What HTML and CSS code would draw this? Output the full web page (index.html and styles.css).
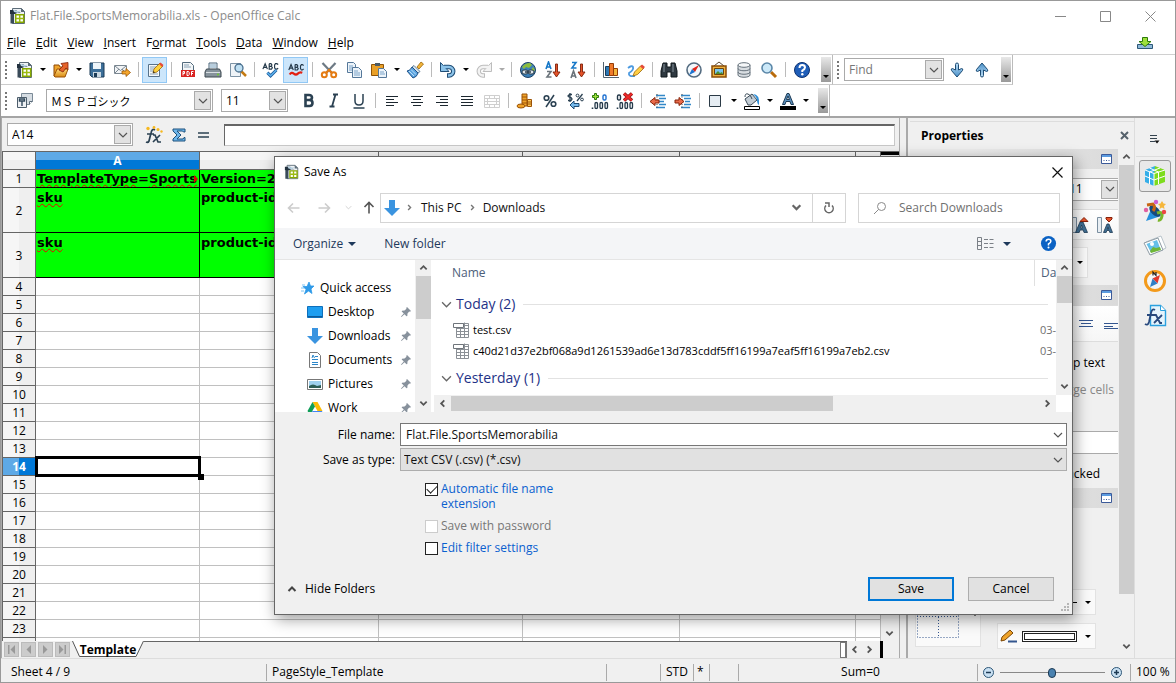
FILE: index.html
```html
<!DOCTYPE html>
<html lang="en">
<head>
<meta charset="utf-8">
<title>Flat.File.SportsMemorabilia.xls - OpenOffice Calc</title>
<link rel="stylesheet" href="styles.css">
</head>
<body>
<svg class="defs" aria-hidden="true">
<defs>
<linearGradient id="g-blue" x1="0" y1="0" x2="0" y2="1"><stop offset="0" stop-color="#bfe0f7"/><stop offset="1" stop-color="#4a90c8"/></linearGradient>
<linearGradient id="g-gold" x1="0" y1="0" x2="0" y2="1"><stop offset="0" stop-color="#ffd97a"/><stop offset="1" stop-color="#d98a12"/></linearGradient>
</defs>
<symbol id="calc" viewBox="0 0 18 18"><path d="M3.500 1.500h9l3 3v12h-12z" fill="#eef2f5" stroke="#5c6c78"/><path d="M12 1l4 4h-4z" fill="#5c6c78"/><path d="M1.500 7v9.500H5V6z" fill="#3a4b59"/><path d="M1 3h6l2 2 3 1H8L6 7H1z" fill="#23323f"/><path d="M4 2.500l5 1.500 3-.5-3 2.500-4-1z" fill="#b9d3e4"/><path d="M6.700 7.700h8v7.600h-8z" fill="#fff" stroke="#86a800" stroke-width="1.500"/><path d="M10.700 8v7M7 11.500h7.500" stroke="#9dbb10" stroke-width="1.500"/></symbol>
<symbol id="open" viewBox="0 0 18 18"><path d="M2 15V4h5l1 2h6v3" fill="#f0a52c" stroke="#8e4b05"/><path d="M2 15l3-7h11l-3 8H3z" fill="url(#g-gold)" stroke="#9b5307"/><path d="M7 9l4-4-2-2.500 7-1v7L14 7l-3 4z" fill="#e5632a" stroke="#85210a" stroke-width=".8"/></symbol>
<symbol id="save" viewBox="0 0 18 18"><path d="M2 2h14v14H4l-2-2z" fill="#3c6f99" stroke="#1b3b57"/><path d="M5 2h8v6H5z" fill="#eef5fa"/><path d="M5 11h8v5H5z" fill="#c8d6e0"/><path d="M6 12h3v4H6z" fill="#1b3b57"/></symbol>
<symbol id="mail" viewBox="0 0 18 18"><path d="M1.500 4.500h12v8h-12z" fill="#f2f4f6" stroke="#7a8791"/><path d="M2 5l5.500 4.500L13 5M2 12l4-4M13 12L9 8" fill="none" stroke="#7a8791"/><path d="M9 10h4V7.500l4.500 4-4.500 4V13H9z" fill="#f3a52c" stroke="#9a5606" stroke-width=".8"/></symbol>
<symbol id="edit" viewBox="0 0 18 18"><path d="M2.500 3.500h11v12h-11z" fill="#f4f8fb" stroke="#57728a"/><path d="M4 6h6M4 8h5M4 10h4M4 13h8" stroke="#8aa2b5"/><path d="M7 12l1-4 6-6 3 3-6 6z" fill="#ffd23c" stroke="#9b6607" stroke-width=".8"/><path d="M13 3l1.500-1.500 3 2.500L16 6z" fill="#e54b3b"/><path d="M7 12l.5-2 1.500 1.500z" fill="#222"/></symbol>
<symbol id="pdf" viewBox="0 0 18 18"><path d="M3.500 1.500h8l3 3v11h-11z" fill="#f3f6f8" stroke="#536b7d"/><path d="M5 4h5M5 6h7" stroke="#8aa2b5"/><path d="M2 9h14v7H2z" fill="#d92321"/><path d="M4 14.500V10.500h1.500v2H4M8 10.500v4h1.500l.7-1v-2l-.7-1zM12.500 14.500v-4h2M12.500 12.500h1.500" fill="none" stroke="#fff"/></symbol>
<symbol id="print" viewBox="0 0 18 18"><path d="M5 2h8v7H5z" fill="#f5f8fa" stroke="#49647b"/><path d="M6 4h6M6 6h6" stroke="#7ba3c0"/><path d="M2.500 8h13l1.500 3v5H1v-5z" fill="#87939c" stroke="#3c4850"/><path d="M2 11.500h14" stroke="#d9dfe3"/><circle cx="14" cy="13.500" r="1" fill="#71cf2b"/></symbol>
<symbol id="preview" viewBox="0 0 18 18"><path d="M1.500 2.500h10v13h-10z" fill="#eef3f7" stroke="#7d93a5"/><path d="M12 10l5 5" stroke="#c47b14" stroke-width="2.500"/><circle cx="10" cy="7" r="4" fill="#bfe0f3" stroke="#4a6f8e" stroke-width="1.300"/></symbol>
<symbol id="spell" viewBox="0 0 20 18"><path d="M1 8l2.500-6L6 8M2 6h3M8 2v6h2.500l1-1.500-1-1.500H8h2l1-1.500-1-1.500H8M18 3l-1.500-1h-1.500L14 3.500v3L15 8h1.500L18 7" fill="none" stroke="#24394a" stroke-width="1.300"/><path d="M6 12l3.500 3.500L16 9" fill="none" stroke="#1d5c9c" stroke-width="3.400"/><path d="M6 12l3.500 3.500L16 9" fill="none" stroke="#5eb4ef" stroke-width="1.500"/></symbol>
<symbol id="autospell" viewBox="0 0 20 18"><path d="M2 9l2.500-6L7 9M3 7h3M9 3v6h2.500l1-1.500-1-1.500H9h2l1-1.500-1-1.500H9M18.500 4L17 3h-1l-1 1.500v3L16 9h1l1.500-1" fill="none" stroke="#24394a" stroke-width="1.300"/><path d="M3 14q2-3 4.500-1t4.500 0 5-1" fill="none" stroke="#e22112" stroke-width="2.500"/></symbol>
<symbol id="cut" viewBox="0 0 18 18"><path d="M2.500 2l9 9.500M15.500 2l-9 9.500" stroke="#6d7a85" stroke-width="2.200"/><path d="M6 12l3-3 3 3" fill="none" stroke="#e47b12" stroke-width="2"/><circle cx="4.300" cy="13.700" r="2.500" fill="#fff" stroke="#e47b12" stroke-width="2"/><circle cx="13.700" cy="13.700" r="2.500" fill="#fff" stroke="#e47b12" stroke-width="2"/></symbol>
<symbol id="copy" viewBox="0 0 18 18"><path d="M2.500 1.500h6l2 2v8h-8z" fill="#edf4fa" stroke="#55789a"/><path d="M4 5h4M4 7h5M4 9h4" stroke="#7ba3c8"/><path d="M7.500 6.500h6l3 3v7h-9z" fill="#edf4fa" stroke="#55789a"/><path d="M9 10h4M9 12h6M9 14h6" stroke="#7ba3c8"/></symbol>
<symbol id="paste" viewBox="0 0 18 18"><path d="M1.500 3.500h12v11h-12z" fill="#e9a028" stroke="#8f5408"/><path d="M5 2h5v3H5z" fill="#4b5b66"/><path d="M8.500 7.500h5l3 3v6h-8z" fill="#edf4fa" stroke="#55789a"/><path d="M10 11h4M10 13h5" stroke="#7ba3c8"/></symbol>
<symbol id="brush" viewBox="0 0 18 18"><path d="M11 6l4-5 2.500 2-4.500 5z" fill="#f3b53b" stroke="#9b6607" stroke-width=".8"/><path d="M8 4.500l6 6-2 1.500-6-6z" fill="#d7e3ec" stroke="#44657f" stroke-width=".8"/><path d="M6 6l6 6q-1 4-5 5l-6-7q3 0 5-4z" fill="#5ba4e0" stroke="#1f5288"/><path d="M3 10l5 5M5 8.500l5 5" stroke="#bfe0f7"/></symbol>
<symbol id="undo" viewBox="0 0 18 18"><path d="M5 6h5a4 4 0 0 1 0 8.500H8" fill="none" stroke="#1f4d75" stroke-width="4.400"/><path d="M1.500 1.500v9h8.500z" fill="#8cc3e9" stroke="#1f4d75"/><path d="M4 6h6a4 4 0 0 1 0 8.500H9" fill="none" stroke="#8cc3e9" stroke-width="2.400"/></symbol>
<symbol id="redo" viewBox="0 0 18 18"><path d="M13 6H8a4 4 0 0 0 0 8.500h2" fill="none" stroke="#bdbdbd" stroke-width="4.400"/><path d="M16.500 1.500v9H8z" fill="#f3f3f3" stroke="#bdbdbd"/><path d="M14 6H8a4 4 0 0 0 0 8.500h1" fill="none" stroke="#f3f3f3" stroke-width="2.400"/></symbol>
<symbol id="link" viewBox="0 0 18 18"><circle cx="9" cy="9" r="7.500" fill="#3c80b8" stroke="#1c4064"/><path d="M3 6q3-4 8-4l2 2-3 3-3-1-2 2zM14 6l2 3-2 3-2-3z" fill="#8dbd3c"/><rect x="3" y="9" width="6" height="4" rx="2" fill="#dfe6eb" stroke="#2b3d4b"/><rect x="9" y="9" width="6" height="4" rx="2" fill="#dfe6eb" stroke="#2b3d4b"/><path d="M6 11h6" stroke="#2b3d4b" stroke-width="1.500"/></symbol>
<symbol id="sorta" viewBox="0 0 18 18"><path d="M2 8l2.500-7L7 8M3 6h3" fill="none" stroke="#1778c8" stroke-width="1.600"/><path d="M3 10.500h4L3 16h4.500" fill="none" stroke="#6b747b" stroke-width="1.600"/><path d="M11.500 3h2v8h2.500l-3.500 5L9 11h2.500z" fill="#e5532a" stroke="#7d210a" stroke-width=".9"/></symbol>
<symbol id="sortz" viewBox="0 0 18 18"><path d="M3 1.500h4L3 7h4.500" fill="none" stroke="#1778c8" stroke-width="1.600"/><path d="M2 17l2.500-7L7 17M3 15h3" fill="none" stroke="#6b747b" stroke-width="1.600"/><path d="M11.500 3h2v8h2.500l-3.500 5L9 11h2.500z" fill="#e5532a" stroke="#7d210a" stroke-width=".9"/></symbol>
<symbol id="chart" viewBox="0 0 18 18"><path d="M1.500 1v15.500H17" fill="none" stroke="#53636f"/><path d="M3.500 5.500h4v9h-4z" fill="#2e78b3" stroke="#153c5d"/><path d="M7.500 2.500h4v12h-4z" fill="#f07a2b" stroke="#943c06"/><path d="M11.500 7.500h4v7h-4z" fill="#f3b53b" stroke="#943c06"/></symbol>
<symbol id="draw" viewBox="0 0 18 18"><path d="M1 7q4-3 5-1 1 3-4 6-1 4 6 3" fill="none" stroke="#4c9ae0" stroke-width="1.800"/><path d="M6 15l1.500-4L14 4.500l3 2.500-6.500 6.500z" fill="#ffcf45" stroke="#9b6607" stroke-width=".8"/><path d="M13 5.500l2-2 3 2.500-2 2z" fill="#e54b3b"/></symbol>
<symbol id="find" viewBox="0 0 18 18"><path d="M3 2h4v4h4V2h4l2 8v6h-6v-5H7v5H1v-6z" fill="#2f3941" stroke="#11181d"/><path d="M4 3v8M13 3v8" stroke="#87939c"/></symbol>
<symbol id="nav" viewBox="0 0 18 18"><circle cx="9" cy="9" r="7" fill="#f3f8fc" stroke="#536b80" stroke-width="1.600"/><path d="M14 4l-4 7-3-3z" fill="#e2241a"/><path d="M4 14l3-6 3 3z" fill="#1d74d0"/></symbol>
<symbol id="gallery" viewBox="0 0 18 18"><path d="M4 5l5-4 5 4" fill="none" stroke="#5b4a33"/><path d="M2 5h14v11H2z" fill="#efb23d" stroke="#8a4d09" stroke-width="1.500"/><path d="M4.500 7.500h9v6h-9z" fill="#79c4ee" stroke="#6d4309"/><path d="M5 13l3-3 2 2 2-1 1 2z" fill="#4c8e2e"/></symbol>
<symbol id="db" viewBox="0 0 18 18"><path d="M3 4v10c0 3 12 3 12 0V4" fill="#d8dde1" stroke="#66727c"/><ellipse cx="9" cy="4" rx="6" ry="2.300" fill="#f5f7f8" stroke="#66727c"/><path d="M3 7.500c0 3 12 3 12 0M3 11c0 3 12 3 12 0" fill="none" stroke="#66727c"/></symbol>
<symbol id="zoom" viewBox="0 0 18 18"><path d="M11 11l5 5" stroke="#b86b0c" stroke-width="3"/><circle cx="7" cy="7" r="5" fill="#cbe8f8" stroke="#5b87a8" stroke-width="1.600"/></symbol>
<symbol id="help" viewBox="0 0 18 18"><circle cx="9" cy="9" r="7.500" fill="#1f5eb8" stroke="#0d3170"/><path d="M6.500 7q0-3 2.700-3T12 6.500Q12 8 9.300 9.500V11" fill="none" stroke="#fff" stroke-width="2"/><circle cx="9.300" cy="13.200" r="1.200" fill="#fff"/></symbol>
<symbol id="down" viewBox="0 0 18 18"><path d="M7.500 3.500q0-1.500 1.500-1.500t1.500 1.500V9l3-1.500q2 0 1 2L9 16 3.500 9.500q-1-2 1-2l3 1.500z" fill="url(#g-blue)" stroke="#1f4d75"/></symbol>
<symbol id="styles" viewBox="0 0 18 18"><path d="M5.500 1.500h11v8l-3 3h-8z" fill="#d6dde3" stroke="#7b8a97"/><path d="M16.500 9.500h-3v3" fill="#fff" stroke="#5d6d7b"/><path d="M1.500 5.500h9v10h-9z" fill="#eef1f4" stroke="#4c5d6b"/><path d="M3.500 8v-1h5v2h-5zM6 9v5" fill="none" stroke="#32495c" stroke-width="1.400"/></symbol>
<symbol id="bold" viewBox="0 0 18 18"><path d="M5.500 3v11h4q3 0 3-3t-3-3h-4 3.500q3 0 3-2.500T9 3z" fill="none" stroke="#2b4152" stroke-width="2.600"/></symbol>
<symbol id="italic" viewBox="0 0 18 18"><path d="M8 2.500h5M4.500 14.500h5M10.500 2.500l-3.500 12" fill="none" stroke="#2b4152" stroke-width="1.800"/></symbol>
<symbol id="under" viewBox="0 0 18 18"><path d="M5 2v7q0 4 4 4t4-4V2M3.500 16h11" fill="none" stroke="#2b4152" stroke-width="1.500"/></symbol>
<symbol id="al" viewBox="0 0 18 18"><path d="M3 4.500h12M3 7.500h8M3 10.500h12M3 13.500h8" stroke="#1d2830"/></symbol>
<symbol id="ac" viewBox="0 0 18 18"><path d="M3 4.500h12M5 7.500h8M3 10.500h12M5 13.500h8" stroke="#1d2830"/></symbol>
<symbol id="ar" viewBox="0 0 18 18"><path d="M3 4.500h12M7 7.500h8M3 10.500h12M7 13.500h8" stroke="#1d2830"/></symbol>
<symbol id="aj" viewBox="0 0 18 18"><path d="M3 4.500h12M3 7.500h12M3 10.500h12M3 13.500h12" stroke="#1d2830"/></symbol>
<symbol id="merge" viewBox="0 0 18 18"><path d="M1.500 3.500h15v12h-15zM1.500 6.500h15M1.500 9.500h15M1.500 12.500h15M6.500 3.500v3M11.500 3.500v3M6.500 12.500v3M11.500 12.500v3M4.500 6.500v6M13.500 6.500v6" fill="none" stroke="#cfcfcf"/></symbol>
<symbol id="coins" viewBox="0 0 18 18"><path d="M6 2h5v12H6z" fill="#f0a42a" stroke="#9b5307"/><path d="M11.500 7.500h4v7h-4z" fill="#ffc857" stroke="#9b5307"/><ellipse cx="5" cy="14" rx="4" ry="2" fill="#f0a42a" stroke="#9b5307"/><path d="M6 5h5M6 8h5M6 11h5M12 10h3M12 12h3" stroke="#9b5307"/></symbol>
<symbol id="pct" viewBox="0 0 18 18"><circle cx="5.500" cy="6" r="2.300" fill="none" stroke="#2b4152" stroke-width="1.600"/><circle cx="12.500" cy="12" r="2.300" fill="none" stroke="#2b4152" stroke-width="1.600"/><path d="M13 3L5 15" stroke="#2b4152" stroke-width="1.500"/></symbol>
<symbol id="std" viewBox="0 0 18 18"><path d="M6 2.500H3.500L2 4l1 1 2 .5L6 7 5 8.500H2M4 1v9M16.500 2L11 9" fill="none" stroke="#2b4152" stroke-width="1.300"/><circle cx="11.500" cy="3.500" r="1.400" fill="none" stroke="#2b4152"/><circle cx="16" cy="7.500" r="1.400" fill="none" stroke="#2b4152"/><path d="M4 13l4-4v2.500h5v3H8V17z" fill="#74b8ea" stroke="#1f4d75"/></symbol>
<symbol id="zeros" viewBox="0 0 18 8"><path d="M1.500 6v1.500" stroke="#24394a" stroke-width="1.600"/><rect x="4" y="1" width="2.500" height="6" rx="1.200" fill="none" stroke="#24394a" stroke-width="1.300"/><rect x="9" y="1" width="2.500" height="6" rx="1.200" fill="none" stroke="#24394a" stroke-width="1.300"/><rect x="14" y="1" width="2.500" height="6" rx="1.200" fill="none" stroke="#24394a" stroke-width="1.300"/></symbol>
<symbol id="addd" viewBox="0 0 18 18"><path d="M3.500 1.500h2v2h2v2h-2v2h-2v-2h-2v-2h2z" fill="#9ee03c" stroke="#2c7a09"/><rect x="12" y="3" width="3" height="5" rx="1.300" fill="none" stroke="#1d6fd0" stroke-width="1.400"/><use href="#zeros" y="9.500" width="18" height="8"/></symbol>
<symbol id="deld" viewBox="0 0 18 18"><rect x="1.500" y="3" width="3" height="5" rx="1.300" fill="none" stroke="#24394a" stroke-width="1.400"/><use href="#zeros" y="9.500" width="18" height="8"/><path d="M8 1.500l8 7M16 1.500l-8 7" stroke="#8e0d0d" stroke-width="3.500"/><path d="M8 1.500l8 7M16 1.500l-8 7" stroke="#ef2b2b" stroke-width="2"/></symbol>
<symbol id="indl" viewBox="0 0 18 18"><path d="M7 3.500h9M10 6.500h7M10 9.500h5M10 12.500h7M7 15.500h9" stroke="#3388c8" stroke-width="1.400"/><path d="M8 2v15" stroke="#444" stroke-dasharray="1 1.500"/><path d="M1 9.500l5-4V8h4v3H6v2.500z" fill="#e86a4a" stroke="#862309"/></symbol>
<symbol id="indr" viewBox="0 0 18 18"><path d="M7 3.500h9M10 6.500h7M11 9.500h5M10 12.500h7M7 15.500h9" stroke="#3388c8" stroke-width="1.400"/><path d="M8 2v15" stroke="#444" stroke-dasharray="1 1.500"/><path d="M10 9.500l-5-4V8H1v3h4v2.500z" fill="#e86a4a" stroke="#862309"/></symbol>
<symbol id="border" viewBox="0 0 18 18"><path d="M2.500 3.500h11v11h-11z" fill="#e6edf3" stroke="#2b3a46"/></symbol>
<symbol id="fill" viewBox="0 0 18 18"><path d="M2 7l7-5 5 6-6 5H5z" fill="#c3cdd5" stroke="#3c4c59"/><path d="M2 5q0-4 3-3t4 5" fill="none" stroke="#3c4c59"/><path d="M10 2q7 0 6 11-2-1-2-5-1-4-4-6z" fill="#2f8fd8"/><path d="M1.500 14.500h15v3h-15z" fill="#fff" stroke="#000"/></symbol>
<symbol id="fcol" viewBox="0 0 18 18"><path d="M3.500 12.500L8 1.500h2l4.500 11H12l-1-3H7l-1 3zM7.500 7.500h3L9 4z" fill="#5b90bd" stroke="#1d3a54" fill-rule="evenodd"/><path d="M1 14h16v4H1z" fill="#000"/></symbol>
<symbol id="fx" viewBox="0 0 18 18"><path d="M10 4q-3-2-4 3L4 15q-1 2-3 1M2 8h7M8 9l2 0 3 7h3M15 9l-7 7" fill="none" stroke="#2b4152" stroke-width="1.700"/><g fill="#f6b921"><circle cx="3" cy="2.500" r="1.700"/><circle cx="9" cy="1.500" r="1.400"/><circle cx="13" cy="3.500" r="1.500"/><circle cx="16.500" cy="5.500" r="1.200"/></g></symbol>
<symbol id="sum" viewBox="0 0 18 18"><path d="M3 3h12v3h-1.500l-1-1H7l4 4-4 4h6l1-1.500H15V15H3v-2l4-4-4-4z" fill="#6cb5ea" stroke="#1c517d"/></symbol>
<symbol id="eq" viewBox="0 0 18 18"><path d="M3 7h11M3 11h11" stroke="#2b4152" stroke-width="1.600"/></symbol>
<symbol id="chev" viewBox="0 0 10 10"><path d="M1 3l4 4 4-4" fill="none" stroke="currentColor" stroke-width="1.200"/></symbol>
<symbol id="bchev" viewBox="0 0 10 10"><path d="M1.500 3l3.500 3.500L8.500 3" fill="none" stroke="currentColor" stroke-width="2"/></symbol>
<symbol id="arrow" viewBox="0 0 14 14"><path d="M1.500 7h11M6 2.500L1.500 7 6 11.500" fill="none" stroke="currentColor" stroke-width="1.600"/></symbol>
<symbol id="dl" viewBox="0 0 16 16"><path d="M5 0h6v8h5l-8 8-8-8h5z" fill="#3a94e0"/></symbol>
<symbol id="more" viewBox="0 0 11 10"><path d="M.5.5h10v9H.5z" fill="#fff" stroke="#3c5a99"/><path d="M1 2h9" stroke="#5b9be0" stroke-width="2"/><path d="M2.500 6.500h6" stroke="#3c5a99" stroke-dasharray="1 1.500"/></symbol>
<symbol id="pin" viewBox="0 0 10 10"><path d="M6 0l4 4-1 .8-.8-.3L6.500 6.500 6.300 9 5.500 9.300 3.500 7.200.5 10 0 9.500l2.800-3L.7 4.500 1 3.700l2.500-.2 2-1.700L5.200 1z" fill="#87919c"/></symbol>
<symbol id="csv" viewBox="0 0 16 16"><path d="M3.500 1.500h12v14h-12zM7.500 1.500v14M11.500.5v15M3.500 6.500h12M3.500 9.500h12M3.500 12.500h12M8 3.500h7.500" fill="#fff" stroke="#8b9096"/><path d="M.5 1.500h10v4H.5z" fill="#fff" stroke="#6f757b"/></symbol>
</svg>

<div class="window">
<header class="titlebar">
<svg class="ic"><use href="#calc"/></svg><h1>Flat.File.SportsMemorabilia.xls - OpenOffice Calc</h1>
<div class="winbtns">
<button aria-label="Minimize"><svg viewBox="0 0 11 11"><path d="M0 5.500h11"/></svg></button>
<button aria-label="Maximize"><svg viewBox="0 0 11 11"><path d="M.5.5h10v10H.5z"/></svg></button>
<button aria-label="Close"><svg viewBox="0 0 11 11"><path d="M.5.5l10 10M10.500.5l-10 10"/></svg></button>
</div>
</header>
<nav class="menubar">
<a href="#"><u>F</u>ile</a><a href="#"><u>E</u>dit</a><a href="#"><u>V</u>iew</a><a href="#"><u>I</u>nsert</a><a href="#">F<u>o</u>rmat</a><a href="#"><u>T</u>ools</a><a href="#"><u>D</u>ata</a><a href="#"><u>W</u>indow</a><a href="#"><u>H</u>elp</a>
<button class="update" aria-label="Updates available"><svg viewBox="0 0 16 12"><path d="M.5 7.500h15v4H.5z" fill="#8fb9d8" stroke="#2c5878"/><path d="M5.500.5h5v4H14L8 9.500 2 4.500h3.500z" fill="#9ee03c" stroke="#2c7a09"/></svg></button>
</nav>

<div class="toolrow">
<div class="toolbar">
<i class="grip"></i>
<button class="tb" aria-label="New"><svg class="ic"><use href="#calc"/></svg></button><button class="dd" aria-label="New options"></button>
<button class="tb" aria-label="Open"><svg class="ic"><use href="#open"/></svg></button><button class="dd" aria-label="Open options"></button>
<button class="tb" aria-label="Save document"><svg class="ic"><use href="#save"/></svg></button>
<button class="tb" aria-label="E-mail"><svg class="ic"><use href="#mail"/></svg></button><i class="sep"></i>
<button class="tb on" aria-label="Edit file"><svg class="ic"><use href="#edit"/></svg></button><i class="sep"></i>
<button class="tb" aria-label="Export PDF"><svg class="ic"><use href="#pdf"/></svg></button>
<button class="tb" aria-label="Print"><svg class="ic"><use href="#print"/></svg></button>
<button class="tb" aria-label="Preview"><svg class="ic"><use href="#preview"/></svg></button><i class="sep"></i>
<button class="tb" aria-label="Spelling"><svg class="ic"><use href="#spell"/></svg></button>
<button class="tb on" aria-label="AutoSpellcheck"><svg class="ic"><use href="#autospell"/></svg></button><i class="sep"></i>
<button class="tb" aria-label="Cut"><svg class="ic"><use href="#cut"/></svg></button>
<button class="tb" aria-label="Copy"><svg class="ic"><use href="#copy"/></svg></button>
<button class="tb" aria-label="Paste"><svg class="ic"><use href="#paste"/></svg></button><button class="dd" aria-label="Paste options"></button>
<button class="tb" aria-label="Format paintbrush"><svg class="ic"><use href="#brush"/></svg></button><i class="sep"></i>
<button class="tb" aria-label="Undo"><svg class="ic"><use href="#undo"/></svg></button><button class="dd" aria-label="Undo options"></button>
<button class="tb" aria-label="Redo"><svg class="ic"><use href="#redo"/></svg></button><button class="dd off" aria-label="Redo options"></button><i class="sep"></i>
<button class="tb" aria-label="Hyperlink"><svg class="ic"><use href="#link"/></svg></button>
<button class="tb" aria-label="Sort ascending"><svg class="ic"><use href="#sorta"/></svg></button>
<button class="tb" aria-label="Sort descending"><svg class="ic"><use href="#sortz"/></svg></button><i class="sep"></i>
<button class="tb" aria-label="Chart"><svg class="ic"><use href="#chart"/></svg></button>
<button class="tb" aria-label="Draw functions"><svg class="ic"><use href="#draw"/></svg></button><i class="sep"></i>
<button class="tb" aria-label="Find and replace"><svg class="ic"><use href="#find"/></svg></button>
<button class="tb" aria-label="Navigator"><svg class="ic"><use href="#nav"/></svg></button>
<button class="tb" aria-label="Gallery"><svg class="ic"><use href="#gallery"/></svg></button>
<button class="tb" aria-label="Data sources"><svg class="ic"><use href="#db"/></svg></button>
<button class="tb" aria-label="Zoom"><svg class="ic"><use href="#zoom"/></svg></button><i class="sep"></i>
<button class="tb" aria-label="Help"><svg class="ic"><use href="#help"/></svg></button>
<button class="more" aria-label="More tools"></button>
</div>
<div class="toolbar">
<i class="grip"></i>
<div class="combo find"><input aria-label="Find" placeholder="Find"><button aria-label="Find history"><svg><use href="#chev"/></svg></button></div>
<button class="tb" aria-label="Find next"><svg class="ic"><use href="#down"/></svg></button>
<button class="tb" aria-label="Find previous"><svg class="ic flip"><use href="#down"/></svg></button>
<button class="more" aria-label="More find tools"></button>
</div>
</div>
<div class="toolrow last">
<div class="toolbar">
<i class="grip"></i>
<button class="tb" aria-label="Styles"><svg class="ic"><use href="#styles"/></svg></button>
<div class="combo font"><input aria-label="Font name" lang="ja" value="ＭＳ Ｐゴシック"><button aria-label="Font list"><svg><use href="#chev"/></svg></button></div>
<div class="combo size"><input aria-label="Font size" value="11"><button aria-label="Size list"><svg><use href="#chev"/></svg></button></div>
<button class="tb" aria-label="Bold"><svg class="ic"><use href="#bold"/></svg></button>
<button class="tb" aria-label="Italic"><svg class="ic"><use href="#italic"/></svg></button>
<button class="tb" aria-label="Underline"><svg class="ic"><use href="#under"/></svg></button><i class="sep"></i>
<button class="tb" aria-label="Align left"><svg class="ic"><use href="#al"/></svg></button>
<button class="tb" aria-label="Center"><svg class="ic"><use href="#ac"/></svg></button>
<button class="tb" aria-label="Align right"><svg class="ic"><use href="#ar"/></svg></button>
<button class="tb" aria-label="Justify"><svg class="ic"><use href="#aj"/></svg></button>
<button class="tb" aria-label="Merge cells"><svg class="ic"><use href="#merge"/></svg></button><i class="sep"></i>
<button class="tb" aria-label="Currency"><svg class="ic"><use href="#coins"/></svg></button>
<button class="tb" aria-label="Percent"><svg class="ic"><use href="#pct"/></svg></button>
<button class="tb" aria-label="Standard format"><svg class="ic"><use href="#std"/></svg></button>
<button class="tb" aria-label="Add decimal"><svg class="ic"><use href="#addd"/></svg></button>
<button class="tb" aria-label="Delete decimal"><svg class="ic"><use href="#deld"/></svg></button><i class="sep"></i>
<button class="tb" aria-label="Decrease indent"><svg class="ic"><use href="#indl"/></svg></button>
<button class="tb" aria-label="Increase indent"><svg class="ic"><use href="#indr"/></svg></button><i class="sep"></i>
<button class="tb" aria-label="Borders"><svg class="ic"><use href="#border"/></svg></button><button class="dd" aria-label="Border options"></button>
<button class="tb" aria-label="Background color"><svg class="ic"><use href="#fill"/></svg></button><button class="dd" aria-label="Background options"></button>
<button class="tb" aria-label="Font color"><svg class="ic"><use href="#fcol"/></svg></button><button class="dd" aria-label="Font color options"></button>
<button class="more" aria-label="More formatting"></button>
</div>
</div>

<main class="main">
<section class="doc">
<div class="formula">
<div class="combo name"><input aria-label="Name box" value="A14"><button aria-label="Names"><svg><use href="#chev"/></svg></button></div>
<button class="tb" aria-label="Function wizard"><svg class="ic"><use href="#fx"/></svg></button>
<button class="tb" aria-label="Sum"><svg class="ic"><use href="#sum"/></svg></button>
<button class="tb" aria-label="Function"><svg class="ic"><use href="#eq"/></svg></button>
<input class="line" aria-label="Input line">
</div>
<div class="gridwrap">
<div class="grid">
<table>
<colgroup><col class="c0"><col class="c1"><col class="c2"><col class="c3"><col class="c4"><col class="c5"><col></colgroup>
<thead><tr><th></th><th class="sel">A</th><th>B</th><th>C</th><th>D</th><th>E</th><th></th></tr></thead>
<tbody>
<tr class="g"><th>1</th><td class="cut"><span class="sp">TemplateType</span>=<span class="sp">Sports</span></td><td>Version=2014</td><td></td><td></td><td></td><td></td></tr>
<tr class="g tall"><th>2</th><td><span class="sp">sku</span></td><td>product-id</td><td></td><td></td><td></td><td></td></tr>
<tr class="g tall"><th>3</th><td><span class="sp">sku</span></td><td>product-id</td><td></td><td></td><td></td><td></td></tr>
<tr><th>4<td><td><td><td><td><td>
<tr><th>5<td><td><td><td><td><td>
<tr><th>6<td><td><td><td><td><td>
<tr><th>7<td><td><td><td><td><td>
<tr><th>8<td><td><td><td><td><td>
<tr><th>9<td><td><td><td><td><td>
<tr><th>10<td><td><td><td><td><td>
<tr><th>11<td><td><td><td><td><td>
<tr><th>12<td><td><td><td><td><td>
<tr><th>13<td><td><td><td><td><td>
<tr><th class="sel">14<td class="cursor"><td><td><td><td><td>
<tr><th>15<td><td><td><td><td><td>
<tr><th>16<td><td><td><td><td><td>
<tr><th>17<td><td><td><td><td><td>
<tr><th>18<td><td><td><td><td><td>
<tr><th>19<td><td><td><td><td><td>
<tr><th>20<td><td><td><td><td><td>
<tr><th>21<td><td><td><td><td><td>
<tr><th>22<td><td><td><td><td><td>
<tr><th>23<td><td><td><td><td><td>
<tr><th><td><td><td><td><td><td>
</tbody>
</table>
</div>
<div class="vsplit"><button aria-label="Scroll down"><svg><use href="#bchev"/></svg></button></div>
</div>
<div class="tabs">
<button class="tn" aria-label="First sheet"><svg viewBox="0 0 9 9"><path d="M1 0h1.500v9H1zM8 0v9L3.500 4.500z"/></svg></button>
<button class="tn" aria-label="Previous sheet"><svg viewBox="0 0 9 9"><path d="M7 0v9L2.500 4.500z"/></svg></button>
<button class="tn" aria-label="Next sheet"><svg viewBox="0 0 9 9"><path d="M2 0v9l4.500-4.500z"/></svg></button>
<button class="tn" aria-label="Last sheet"><svg viewBox="0 0 9 9"><path d="M1 0v9l4.500-4.500zM6.500 0H8v9H6.500z"/></svg></button>
<button class="sheet"><svg viewBox="0 0 72 17" preserveAspectRatio="none"><path d="M.5 0l7 15.500h56.500L71.500 0" fill="#fff" stroke="#555"/></svg><span>Template</span></button>
<div class="track"><i></i></div>
<button class="hs" aria-label="Scroll left"><svg class="r90"><use href="#bchev"/></svg></button><button class="hs" aria-label="Scroll right"><svg class="r270"><use href="#bchev"/></svg></button><i class="blk"></i>
</div>
</section>

<aside class="side">
<section class="deck">
<div class="decktitle"><h2>Properties</h2><button aria-label="Close sidebar"><svg viewBox="0 0 9 9"><path d="M1 1l7 7M8 1L1 8" stroke="#55616b" stroke-width="2"/></svg></button></div>
<div class="deckbody">
<div class="panels">
<div class="ph"><svg><use href="#more"/></svg></div>
<div class="prow fsize"><div class="combo"><input aria-label="Panel font size" value="11"><button aria-label="Panel sizes"><svg><use href="#chev"/></svg></button></div></div>
<div class="prow white grow">
<svg viewBox="0 0 17 18"><path d="M.5 1.500h4v15h-4z" fill="#e8eef3" stroke="#7b8fa0"/><path d="M3.500 16.500L8 6h3l4.500 10.500H12l-.8-2.500H8l-.8 2.500zM8.700 12h1.800L9.600 9z" fill="#3f6e92" stroke="#1d3a54" stroke-width=".8"/><path d="M8 5.500l4-4 4 4z" fill="#e5532a" stroke="#85210a"/></svg>
<svg viewBox="0 0 17 18"><path d="M.5 1.500h4v15h-4z" fill="#e8eef3" stroke="#7b8fa0"/><path d="M6.500 16.500L10 8h2l3.500 8.500h-2.700l-.6-2h-2.400l-.6 2zM10.300 13h1.400L11 11z" fill="#3f6e92" stroke="#1d3a54" stroke-width=".8"/><path d="M9 1.500h6v1.500l-3 3-3-3z" fill="#e5532a" stroke="#85210a"/></svg>
</div>
<div class="prow cbtn"><button class="pbtn" aria-label="Spacing"><i class="dd"></i></button></div>
<div class="ph"><svg><use href="#more"/></svg></div>
<div class="prow white valign"><svg viewBox="0 0 14 10"><path d="M0 1.500h14M2 4.500h10M0 7.500h14" stroke="#34568f"/></svg><svg viewBox="0 0 14 10"><path d="M0 4.500h14M0 7.500h9M0 9.500h14" stroke="#34568f"/></svg></div>
<label class="prow wrap"><span>Wrap text</span></label>
<label class="prow merge"><span>Merge cells</span></label>
<div class="prow degrees"><input aria-label="Degrees"></div>
<label class="prow stack"><span>Vertically stacked</span></label>
<div class="ph"><svg><use href="#more"/></svg></div>
<div class="bord">
<button class="pbtn bgrid" aria-label="Border grid"><svg viewBox="0 0 42 42"><path d="M.5.5h41v41H.5zM21.500 0v42M0 20.500h42" fill="none" stroke="#34568f" stroke-dasharray="1 2"/></svg><i class="dd"></i></button>
<div class="bcol">
<button class="pbtn" aria-label="Line style"><i class="rule"></i><i class="dd"></i></button>
<button class="pbtn" aria-label="Line color"><svg viewBox="0 0 17 14"><path d="M1 12l1-4 8-7 3 3-8 7z" fill="#f0a42a" stroke="#7d4705"/><path d="M8 12.500h9" stroke="#34568f" stroke-width="2"/></svg><i class="swatch"></i><i class="dd"></i></button>
</div>
</div>
</div>
<div class="vs side-vs"><svg class="r180"><use href="#bchev"/></svg><i></i><svg><use href="#bchev"/></svg></div>
</div>
</section>
<nav class="decktabs">
<button class="menu" aria-label="Sidebar settings"><svg viewBox="0 0 12 11"><path d="M1 1.500h7M1 4.500h7M1 7.500h5" stroke="#34434f" stroke-width="1.200"/><path d="M5.500 6.500h5L8 9.500z" fill="#111"/></svg></button>
<button class="dt active" aria-label="Properties"><svg viewBox="0 0 24 24"><path d="M2 6l10-4v9l-1 11-9-4z" fill="#35aee8"/><path d="M12 2l10 4v12l-11 4V11z" fill="#7ddc1c"/><path d="M2 6l9 3.500L22 6M11 9.500V22M2 12l9 4 11-4M6.500 4l9 4v12M17 4L6.500 8v12" fill="none" stroke="#fff" stroke-width="1"/></svg></button>
<button class="dt" aria-label="Styles and formatting"><svg viewBox="0 0 24 24"><path d="M3 22L9 8l9 9z" fill="#2590dc"/><ellipse cx="12" cy="12" rx="7" ry="4" transform="rotate(45 12 12)" fill="#174a7c"/><path d="M14 14q6-2 5 3t-4 4" fill="none" stroke="#7bb52a" stroke-width="3"/><path d="M10 12q3-4 0-7L4 6" fill="none" stroke="#c76513" stroke-width="3"/><path d="M19 2l1.500 2.500 2.500.5-2 2 .5 3-2.500-1.500L16.500 10l.5-3-2-2 2.500-.5z" fill="#f6b73c"/><circle cx="13" cy="3" r="2.200" fill="#cf5fd0"/><circle cx="3" cy="11" r="2.200" fill="#e060a0"/><circle cx="21" cy="13" r="2.200" fill="#ed4545"/></svg></button>
<button class="dt" aria-label="Gallery"><svg viewBox="0 0 24 24"><path d="M3 8L18 2l5 12-15 7z" fill="#fff" stroke="#b9c4cb"/><path d="M1 9l14-5 5 12-13 5z" fill="#fff" stroke="#8c9aa3"/><path d="M3.500 10l10.500-4 3.500 9-9.500 3.500z" fill="#65bfe8"/><path d="M7 17l3-4 3 1 4-1 1 3-10 3z" fill="#6fb638"/><circle cx="9" cy="10" r="2" fill="#fff"/></svg></button>
<button class="dt" aria-label="Navigator"><svg viewBox="0 0 24 24"><circle cx="12" cy="12" r="9.500" fill="#f3f5f7" stroke="#f39a1b" stroke-width="3"/><path d="M17 6l-2.500 8.500-5-5z" fill="#e2362b"/><path d="M7 18l2.500-8.500 5 5z" fill="#2f7fc6"/><path d="M10 6.500V3l3 3.500V3" fill="none" stroke="#222" stroke-width="1.200"/></svg></button>
<button class="dt" aria-label="Functions"><svg viewBox="0 0 24 24"><path d="M7.500 1.500h10l5 5v15h-15z" fill="#e6f4fc" stroke="#2aa0de" stroke-width="1.400"/><path d="M17.500 1.500v5h5" fill="#fff" stroke="#2aa0de"/><path d="M12 6q-3-2-4 3L6 18q-1 4-4 2M4 11h8M11 11h2l4 8h2M19 11l-8 8" fill="none" stroke="#28497d" stroke-width="1.800"/></svg></button>
</nav>
</aside>
</main>

<footer class="status">
<span class="s1">Sheet 4 / 9</span><span class="s2">PageStyle_Template</span><span class="s3"></span><span class="s4">STD</span><span class="s5">*</span><span class="s6"></span><span class="s7">Sum=0</span>
<span class="s8"><button aria-label="Zoom out"><svg viewBox="0 0 11 11"><circle cx="5.500" cy="5.500" r="5" fill="#c9e0f2" stroke="#2d5676"/><path d="M3 5.500h5" stroke="#1d3a54" stroke-width="1.500"/></svg></button><input type="range" aria-label="Zoom level" min="0" max="100" value="49"><button aria-label="Zoom in"><svg viewBox="0 0 11 11"><circle cx="5.500" cy="5.500" r="5" fill="#c9e0f2" stroke="#2d5676"/><path d="M3 5.500h5M5.500 3v5" stroke="#1d3a54" stroke-width="1.500"/></svg></button></span>
<span class="s9">100 %</span>
</footer>

<div class="dialog" role="dialog" aria-labelledby="dlg">
<div class="dtitle"><svg class="ic16"><use href="#calc"/></svg><h2 id="dlg">Save As</h2><button aria-label="Close dialog"><svg viewBox="0 0 11 11"><path d="M.5.5l10 10M10.500.5l-10 10" stroke="#111" stroke-width="1.200"/></svg></button></div>
<div class="dnav">
<button class="nb off" aria-label="Back"><svg><use href="#arrow"/></svg></button>
<button class="nb off" aria-label="Forward"><svg class="r180"><use href="#arrow"/></svg></button>
<button class="nb sm off" aria-label="Recent"><svg><use href="#chev"/></svg></button>
<button class="nb up" aria-label="Up"><svg class="r90"><use href="#arrow"/></svg></button>
<div class="addr"><svg class="ic16"><use href="#dl"/></svg><svg class="cr"><use href="#bchev"/></svg><a href="#">This PC</a><svg class="cr"><use href="#bchev"/></svg><a href="#">Downloads</a><button class="drop" aria-label="Previous locations"><svg><use href="#bchev"/></svg></button><button class="ref" aria-label="Refresh"><svg viewBox="0 0 12 12"><path d="M3 3.500a4.200 4.200 0 1 0 6 0" fill="none" stroke="#666" stroke-width="1.500"/><path d="M2 1h4v4" fill="none" stroke="#666" stroke-width="1.500"/></svg></button></div>
<label class="search"><svg viewBox="0 0 14 14"><circle cx="8.500" cy="5.500" r="4" fill="none" stroke="#8a8a8a"/><path d="M5.500 8.500L1 13" stroke="#8a8a8a"/></svg><input aria-label="Search" placeholder="Search Downloads"></label>
</div>
<div class="dtools">
<button>Organize <i class="tri"></i></button><button class="nf">New folder</button>
<button class="view" aria-label="View"><svg viewBox="0 0 17 13"><path d="M.5.5h4v12h-4zM.5 4.500h4M.5 8.500h4M7 2.500h4M12.500 2.500h4M7 6.500h4M12.500 6.500h4M7 10.500h4M12.500 10.500h4" fill="none" stroke="#7b8087"/></svg><i class="tri"></i></button>
<button class="q" aria-label="Help topics"><svg viewBox="0 0 18 18"><circle cx="9" cy="9" r="8" fill="#0b62c4"/><path d="M6.500 7q0-2.500 2.500-2.500t2.500 2.200Q11.500 8 9 9.500V11" fill="none" stroke="#fff" stroke-width="1.600"/><circle cx="9" cy="13.300" r="1.100" fill="#fff"/></svg></button>
</div>
<div class="dbody">
<ul class="tree">
<li class="top"><svg viewBox="0 0 14 14"><path d="M8 1l1.500 4H13l-3 3 1 4.500-3.500-2.500L3.500 13l1.500-4.500L2 5.500h4z" fill="#2f9ae8" stroke="#2f9ae8" stroke-width=".8"/><path d="M1 4h3M0 7h3M0 10h3" stroke="#7cc3f2"/></svg><a href="#">Quick access</a></li>
<li><svg viewBox="0 0 16 16"><path d="M.5 2.500h15v11H.5z" fill="#1e9ef0" stroke="#0d6fbb"/><path d="M1 12.500h14" stroke="#0d5a99"/></svg><a href="#">Desktop</a><svg class="pin"><use href="#pin"/></svg></li>
<li><svg><use href="#dl"/></svg><a href="#">Downloads</a><svg class="pin"><use href="#pin"/></svg></li>
<li><svg viewBox="0 0 16 16"><path d="M2.500.5h8l3 3v12h-11z" fill="#fff" stroke="#777"/><path d="M8 4.500h3M5 7.500h6M5 10.500h6M5 12.500h6" stroke="#2b86c9"/><path d="M5 6l1-3 1.500 3" fill="none" stroke="#2b86c9"/></svg><a href="#">Documents</a><svg class="pin"><use href="#pin"/></svg></li>
<li><svg viewBox="0 0 16 16"><path d="M.5 3.500h15v10H.5z" fill="#fff" stroke="#777"/><path d="M2 5h12v7H2z" fill="#9fd0ee"/><path d="M2 10q4-3 8 0l4-1v3H2z" fill="#2d5d55"/></svg><a href="#">Pictures</a><svg class="pin"><use href="#pin"/></svg></li>
<li><svg viewBox="0 0 16 16"><path d="M5.500 2h5l5 9h-5z" fill="#fbbc05"/><path d="M5.500 2L8 6.500 3 15 .5 11z" fill="#0f9d58"/><path d="M3 15l2.500-4h10L13 15z" fill="#4285f4"/></svg><a href="#">Work</a><svg class="pin"><use href="#pin"/></svg></li>
</ul>
<div class="vs nav-vs"><svg class="r180"><use href="#bchev"/></svg><i></i><svg><use href="#bchev"/></svg></div>
<div class="files">
<div class="ftop">
<div class="list">
<div class="cols"><span class="fn">Name</span><span class="fd">Da</span></div>
<div class="group"><svg><use href="#chev"/></svg>Today (2)<hr></div>
<div class="file"><svg><use href="#csv"/></svg><span class="fn">test.csv</span><span class="fd">03-</span></div>
<div class="file"><svg><use href="#csv"/></svg><span class="fn">c40d21d37e2bf068a9d1261539ad6e13d783cddf5ff16199a7eaf5ff16199a7eb2.csv</span><span class="fd">03-</span></div>
<div class="group second"><svg><use href="#chev"/></svg>Yesterday (1)<hr></div>
</div>
<div class="vs file-vs"><svg class="r180"><use href="#bchev"/></svg><i></i><svg><use href="#bchev"/></svg></div>
</div>
<div class="hscroll"><svg class="r90"><use href="#bchev"/></svg><div><i></i></div><svg class="r270"><use href="#bchev"/></svg></div>
</div>
</div>
<div class="dform">
<label for="fname">File name:</label><div class="field"><input id="fname" value="Flat.File.SportsMemorabilia"><svg><use href="#chev"/></svg></div>
<label for="ftype">Save as type:</label><div class="field grey"><select id="ftype"><option>Text CSV (.csv) (*.csv)</option></select><svg><use href="#chev"/></svg></div>
</div>
<div class="checks">
<label><input type="checkbox" checked><span>Automatic file name extension</span></label>
<label class="dis"><input type="checkbox" disabled><span>Save with password</span></label>
<label><input type="checkbox"><span>Edit filter settings</span></label>
</div>
<div class="dfoot">
<button class="hide"><svg class="r180"><use href="#bchev"/></svg>Hide Folders</button>
<button class="act primary">Save</button><button class="act">Cancel</button>
<svg class="resize" viewBox="0 0 9 9"><path d="M6 1h2M3 4h2M6 4h2M0 7h2M3 7h2M6 7h2" stroke="#b5b5b5" stroke-width="2"/></svg>
</div>
</div>
</div>
</body>
</html>
```
FILE: styles.css
```css
* { box-sizing: border-box; }
body { margin: 0; height: 100vh; overflow: hidden; font: 12px/16px "Open Sans", "Noto Sans", sans-serif; color: #000; background: #fff; }
button, input, select { font: inherit; color: inherit; margin: 0; padding: 0; border: 0; background: none; border-radius: 0; outline: 0; }
button { display: flex; align-items: center; justify-content: center; flex: none; }
a { color: inherit; text-decoration: none; }
h1, h2 { margin: 0; font-size: 12px; font-weight: 400; }
svg { flex: none; display: block; }
i { display: block; flex: none; }
.defs { position: absolute; width: 0; height: 0; }
.ic { width: 18px; height: 18px; }
.ic16 { width: 16px; height: 16px; }
.flip, .r180 { transform: rotate(180deg); }
.r90 { transform: rotate(90deg); }
.r270 { transform: rotate(-90deg); }

.window { position: relative; height: 100%; display: flex; flex-direction: column; border: 1px solid #999; background: #fff; }
.titlebar { height: 30px; flex: none; display: flex; align-items: center; padding-left: 8px; gap: 3px; color: #8c8c8c; }
.winbtns { margin: 0 2px 0 auto; display: flex; }
.winbtns button { width: 45px; height: 28px; }
.winbtns svg { width: 11px; height: 11px; fill: none; stroke: #888; }
.menubar { height: 23px; flex: none; display: flex; align-items: center; padding-left: 6px; gap: 10px; }
.menubar .update { margin-left: auto; margin-right: 22px; }
.update svg { width: 16px; height: 12px; }

.toolrow { height: 31px; flex: none; display: flex; border-top: 1px solid #d0d0d0; }
.toolrow.last { height: 33px; border-top: 0; border-bottom: 2px solid #a5a5a5; }
.toolbar { display: flex; align-items: center; border-right: 1px solid #bbb; border-bottom: 1px solid #ccc; }
.last .toolbar { border-bottom: 0; }
.grip { width: 2px; height: 18px; margin: 0 5px 0 4px; background: repeating-linear-gradient(#777 0 2px, transparent 2px 4px); }
.tb { width: 25px; height: 26px; }
.tb.on { background: #cce6fb; border: 1px solid #91c8f5; }
.dd { width: 11px; height: 24px; display: flex; align-items: center; justify-content: center; }
.dd::before { content: ""; border: 3px solid transparent; border-top-color: #000; border-bottom: 0; }
.dd.off::before { border-top-color: #aaa; }
.sep { width: 1px; height: 15px; margin: 0 3px 0 4px; background: #bbb; }
.more { width: 10px; height: 25px; margin: 0 1px 0 7px; background: linear-gradient(#e8e8e8, #999); align-items: flex-end; padding-bottom: 4px; }
.more::before { content: ""; border: 3px solid transparent; border-top-color: #000; border-bottom: 0; }
.combo { height: 23px; display: flex; border: 1px solid #aaa; background: #fff; padding: 1px; }
.combo input { flex: 1; min-width: 0; padding-left: 3px; }
.combo button { width: 17px; background: #e2e2e2; border: 1px solid #aaa; color: #555; }
.combo svg { width: 10px; height: 10px; }
.find { width: 100px; }
.find input::placeholder { color: #777; opacity: 1; }
.font { width: 167px; margin: 0 8px 0 9px; }
.font input { font-family: "Noto Sans CJK JP", sans-serif; font-size: 11px; }
.size { width: 67px; margin-right: 8px; }

.main { flex: 1; min-height: 0; display: flex; background: #f0f0f0; }
.doc { flex: 1; min-width: 0; display: flex; flex-direction: column; border-left: 1px solid #aaa; border-right: 1px solid #aaa; }
.formula { height: 33px; flex: none; display: flex; align-items: center; padding: 0 4px 0 5px; }
.name { width: 126px; margin-right: 8px; }
.line { flex: 1; height: 22px; margin-left: 8px; background: #fff; border: 1px solid #c8c8c8; border-top: 2px solid #666; border-left: 1px solid #666; }
.gridwrap { flex: 1; min-height: 0; display: flex; border-top: 1px solid #666; }
.grid { flex: 1; min-width: 0; overflow: hidden; background: #fff; border-left: 1px solid #666; }
.grid table { width: 100%; table-layout: fixed; border-collapse: separate; border-spacing: 0; }
.c0 { width: 33px; } .c1 { width: 164px; } .c2 { width: 179px; } .c3 { width: 144px; } .c4 { width: 157px; } .c5 { width: 176px; }
.grid th, .grid td { height: 18px; padding: 0; border-right: 1px solid #c0c0c0; border-bottom: 1px solid #c0c0c0; overflow: hidden; white-space: nowrap; }
.grid th { font-weight: 400; line-height: 17px; background: linear-gradient(90deg, #f6f6f6 50%, #efefef 50%); border-color: #666; }
.grid thead th { background: linear-gradient(#f6f6f6 50%, #efefef 50%); }
.grid th.sel { color: #fff; font-weight: 700; background: linear-gradient(90deg, #5ea9e6 50%, #0078d7 50%); }
.grid thead th.sel { background: linear-gradient(#5ea9e6 50%, #0078d7 50%); }
.g td { background: #0f0; border-color: #000 !important; font: bold 13px/16px "DejaVu Sans", sans-serif; padding: 1px 0 0 1px !important; vertical-align: top; }
.grid .tall td, .grid .tall th { height: 45px; }
.grid .tall td { padding-top: 2px !important; }
.sp { text-decoration: underline wavy #e00 1px; text-underline-offset: 1px; }
.grid .cut { position: relative; }
.cut::after { content: ""; position: absolute; right: 1px; top: 5px; border: 4px solid transparent; border-left-color: #d00; border-right: 0; }
.grid .cursor { position: relative; overflow: visible; }
.cursor::before { content: ""; position: absolute; inset: -2px -2px -2px -1px; border: 3px solid #000; z-index: 1; }
.cursor::after { content: ""; position: absolute; right: -5px; bottom: -5px; width: 6px; height: 6px; background: #000; z-index: 1; }
.vsplit { width: 18px; flex: none; display: flex; flex-direction: column; justify-content: flex-end; border-top: 3px solid #000; color: #555; }
.vsplit button { height: 16px; width: 17px; }
.vsplit svg, .hs svg { width: 9px; height: 9px; }
.tabs { height: 17px; flex: none; display: flex; padding-left: 2px; }
.tn { width: 15px; height: 15px; margin: 1px 2px 0 0; background: #ccc; border: 1px solid #bbb; }
.tn svg { width: 9px; height: 9px; fill: #999; }
.sheet { position: relative; width: 72px; height: 17px; font-weight: 700; }
.sheet svg { position: absolute; width: 100%; height: 17px; }
.sheet span { position: relative; padding-top: 1px; }
.track { flex: 1; border-top: 1px solid #666; display: flex; justify-content: flex-end; }
.track i { width: 7px; height: 16px; border: 1px solid #777; border-right-width: 2px; background: #fff; }
.hs { width: 15px; color: #555; }
.blk { width: 3px; margin: 0 16px 0 3px; background: #000; }

.side { width: 269px; flex: none; display: flex; margin-left: 6px; border-left: 2px solid #aaa; padding-left: 2px; }
.deck { width: 225px; flex: none; display: flex; flex-direction: column; padding-top: 3px; border-right: 1px solid #ddd; }
.decktitle { height: 28px; flex: none; display: flex; align-items: center; justify-content: space-between; padding: 0 5px 0 11px; border-top: 1px solid #ddd; }
.decktitle h2 { font-weight: 700; }
.decktitle svg { width: 9px; height: 9px; }
.deckbody { flex: 1; min-height: 0; display: flex; }
.panels { flex: 1; min-width: 0; overflow: hidden; }
.ph { height: 20px; display: flex; align-items: center; justify-content: flex-end; padding-right: 6px; background: linear-gradient(90deg, #ececec 30%, #dadada); }
.ph svg { width: 11px; height: 10px; }
.prow { display: flex; align-items: center; justify-content: flex-end; }
.white { background: linear-gradient(#fff, #f6f6f6); border-top: 1px solid #ddd; border-bottom: 1px solid #ddd; }
.fsize { height: 40px; }
.fsize .combo { width: 54px; border-right: 0; padding-right: 0; }
.grow { height: 31px; gap: 8px; padding-right: 4px; }
.grow svg { width: 17px; height: 18px; }
.cbtn { height: 45px; padding-right: 30px; }
.pbtn { background: #fafafa; border: 1px solid #e2e2e2; justify-content: flex-end; padding-right: 2px; }
.cbtn .pbtn { width: 90px; height: 31px; }
.valign { height: 37px; gap: 11px; }
.valign svg { width: 14px; height: 10px; }
.wrap { height: 42px; padding-right: 13px; }
.merge { height: 12px; padding-right: 4px; color: #888; }
.degrees { height: 64px; padding-top: 28px; }
.degrees input { width: 90px; height: 23px; background: #fff; border: solid #aaa; border-width: 1px 0; }
.stack { height: 22px; align-items: flex-end; padding-right: 18px; }
.stack + .ph { margin-top: 6px; }
.bord { display: flex; gap: 16px; padding: 75px 0 0 5px; }
.bgrid { width: 66px; height: 64px; gap: 10px; padding-right: 0; align-items: flex-end; padding-bottom: 8px; }
.bgrid svg { width: 42px; height: 42px; }
.bgrid .dd { margin-bottom: 12px; }
.bcol { display: flex; flex-direction: column; gap: 8px; padding-top: 6px; }
.bcol .pbtn { width: 99px; height: 26px; gap: 5px; }
.bcol svg { width: 17px; height: 14px; }
.rule { width: 40px; height: 1px; background: #000; }
.swatch { width: 55px; height: 11px; border: 3px double #222; background: #fff; }
.vs { width: 16px; flex: none; display: flex; flex-direction: column; align-items: center; background: #f0f0f0; color: #555; }
.vs svg { width: 9px; height: 9px; margin: 3px 0 4px; }
.vs i { width: 15px; background: #cdcdcd; }
.vs svg:last-child { margin-top: auto; }
.side-vs i { flex: 1; margin-bottom: 48px; }
.side-vs svg:last-child { margin-bottom: 7px; }
.decktabs { flex: 1; display: flex; flex-direction: column; align-items: center; gap: 3px; padding-top: 4px; }
.menu { height: 35px; width: 38px; border-bottom: 1px solid #ddd; }
.menu svg { width: 12px; height: 11px; }
.dt { width: 32px; height: 32px; }
.dt.active { border: 1px solid #999; border-radius: 3px; background: #e9e9e9; }
.dt svg { width: 24px; height: 24px; }

.status { height: 24px; flex: none; display: flex; align-items: center; padding-top: 4px; background: #f0f0f0; border-top: 1px solid #ddd; }
.status > span { height: 17px; padding-left: 5px; border-left: 1px solid #aaa; }
.status > .s1 { width: 265px; padding-left: 10px; border: 0; }
.s2 { width: 340px; } .s3 { width: 54px; } .s4 { width: 33px; } .s5 { width: 16px; padding-left: 3px !important; } .s6 { width: 29px; }
.s7 { flex: 1; text-align: center; }
.status > .s8 { width: 153px; display: flex; align-items: center; gap: 6px; padding-right: 8px; }
.s8 svg { width: 11px; height: 11px; }
.s8 input { flex: 1; min-width: 0; height: 11px; appearance: none; background: linear-gradient(#888, #888) center / 100% 1px no-repeat; }
.s8 input::-webkit-slider-thumb { appearance: none; width: 8px; height: 10px; border: 1px solid #1d3a54; border-radius: 4px; background: #4a82b0; }
.status > .s9 { width: 45px; }

.dialog { position: absolute; left: 273px; top: 155px; width: 799px; display: flex; flex-direction: column; background: #f0f0f0; border: 1px solid #666; box-shadow: 2px 4px 14px rgba(0, 0, 0, .4); }
.dtitle { height: 30px; display: flex; align-items: center; gap: 4px; padding: 0 9px; background: #fff; }
.dtitle button { margin-left: auto; }
.dtitle button svg { width: 11px; height: 11px; }
.dnav { height: 41px; display: flex; align-items: center; padding: 0 12px 0 4px; background: #fff; }
.nb { width: 30px; height: 28px; color: #555; }
.nb svg { width: 14px; height: 14px; }
.nb.off { color: #ccc; }
.nb.sm { width: 18px; }
.nb.sm svg { width: 7px; height: 7px; }
.nb.up { width: 23px; }
.addr { flex: 1; height: 30px; display: flex; align-items: center; padding-left: 3px; border: 1px solid #d5d5d5; color: #111; }
.addr .cr { width: 7px; height: 7px; margin: 0 8px 0 6px; transform: rotate(-90deg); color: #777; }
.addr a + .cr { margin: 0 7px; }
.drop { margin-left: auto; width: 32px; height: 28px; color: #666; }
.drop svg { width: 11px; height: 11px; }
.ref { width: 33px; height: 28px; border-left: 1px solid #d5d5d5; }
.ref svg { width: 12px; height: 12px; }
.search { width: 202px; height: 30px; margin-left: 12px; display: flex; align-items: center; gap: 12px; padding-left: 14px; border: 1px solid #d5d5d5; }
.search svg { width: 14px; height: 14px; }
.search input { flex: 1; min-width: 0; }
.search input::placeholder { color: #707070; opacity: 1; }
.dtools { height: 32px; display: flex; align-items: center; padding: 0 15px 0 18px; background: #f4f5f7; border-bottom: 1px solid #e5e5e5; color: #1e395b; }
.tri { margin-left: 5px; border: 4px solid transparent; border-top-color: #1e395b; border-bottom: 0; }
.nf { margin-left: 28px; }
.view { margin-left: auto; margin-right: 29px; }
.view svg { width: 17px; height: 13px; margin-right: 4px; }
.q svg { width: 17px; height: 17px; }
.dbody { height: 152px; display: flex; background: #fff; overflow: hidden; }
.tree { list-style: none; margin: 0; padding: 16px 4px 0 32px; width: 140px; flex: none; }
.tree li { height: 24px; display: flex; align-items: center; gap: 5px; }
.tree li > svg:first-child { width: 16px; height: 16px; }
.tree .top { margin-left: -6px; }
.tree .top > svg:first-child { width: 14px; height: 14px; }
.tree .pin { width: 10px; height: 10px; margin-left: auto; }
.nav-vs i { height: 43px; }
.files { flex: 1; min-width: 0; display: flex; flex-direction: column; padding-left: 3px; }
.ftop { flex: 1; min-height: 0; display: flex; }
.list { flex: 1; min-width: 0; }
.cols { height: 26px; display: flex; align-items: center; padding-left: 18px; color: #4c607a; }
.fn { flex: 1; min-width: 0; white-space: nowrap; }
.fd { width: 22px; padding-left: 6px; white-space: nowrap; }
.cols .fd { height: 26px; line-height: 26px; border-left: 1px solid #e0e0e0; }
.file .fd { color: #707070; }
.group { height: 20px; margin: 8px 8px 5px 7px; display: flex; align-items: center; gap: 4px; font-size: 14px; color: #1e3287; }
.group svg { width: 11px; height: 11px; color: #666; }
.group hr { flex: 1; border: 0; height: 1px; margin: 0 0 0 4px; background: #e2e2e2; }
.file { height: 21px; display: flex; align-items: center; padding-left: 19px; gap: 4px; font-size: 11px; }
.file svg { width: 16px; height: 16px; }
.group.second { margin-top: 7px; }
.file-vs i { height: 27px; }
.hscroll { height: 17px; display: flex; align-items: center; background: #f0f0f0; color: #555; margin-right: 16px; }
.hscroll svg { width: 9px; height: 9px; margin: 0 4px; }
.hscroll div { flex: 1; }
.hscroll i { width: 65%; height: 15px; background: #cdcdcd; }
.dform { display: grid; grid-template-columns: 120px 1fr; column-gap: 5px; row-gap: 2px; align-items: center; padding: 11px 5px 0 0; }
.dform label { text-align: right; }
.field { height: 23px; display: flex; align-items: center; background: #fff; border: 1px solid #777; padding-right: 3px; color: #111; }
.field.grey { background: #e1e1e1; border-color: #adadad; }
.field input, .field select { flex: 1; min-width: 0; appearance: none; padding-left: 3px; }
.field input { padding-left: 5px; }
.field svg { width: 10px; height: 10px; color: #555; }
.checks { margin: 9px 0 0 150px; width: 130px; display: flex; flex-direction: column; gap: 5px; line-height: 15px; color: #0a60cf; }
.checks label { display: flex; gap: 3px; padding: 1px 0; }
.checks input { appearance: none; width: 13px; height: 13px; flex: none; margin-top: 2px; border: 1px solid #222; background: #fff; }
.checks .dis { color: #777; }
.checks .dis input { border-color: #ccc; }
.checks input:checked::before { content: ""; display: block; width: 9px; height: 5px; margin: 1px; border: solid #222; border-width: 0 0 1px 1px; transform: rotate(-45deg); }
.dfoot { position: relative; height: 58px; display: flex; align-items: center; padding: 8px 18px 0 12px; }
.hide { margin-right: auto; gap: 8px; }
.hide svg { width: 10px; height: 10px; color: #444; }
.act { width: 86px; height: 24px; margin-left: 14px; border: 1px solid #adadad; background: #e1e1e1; }
.act.primary { border: 2px solid #0078d7; }
.resize { position: absolute; right: 2px; bottom: 2px; width: 9px; height: 9px; }
```
